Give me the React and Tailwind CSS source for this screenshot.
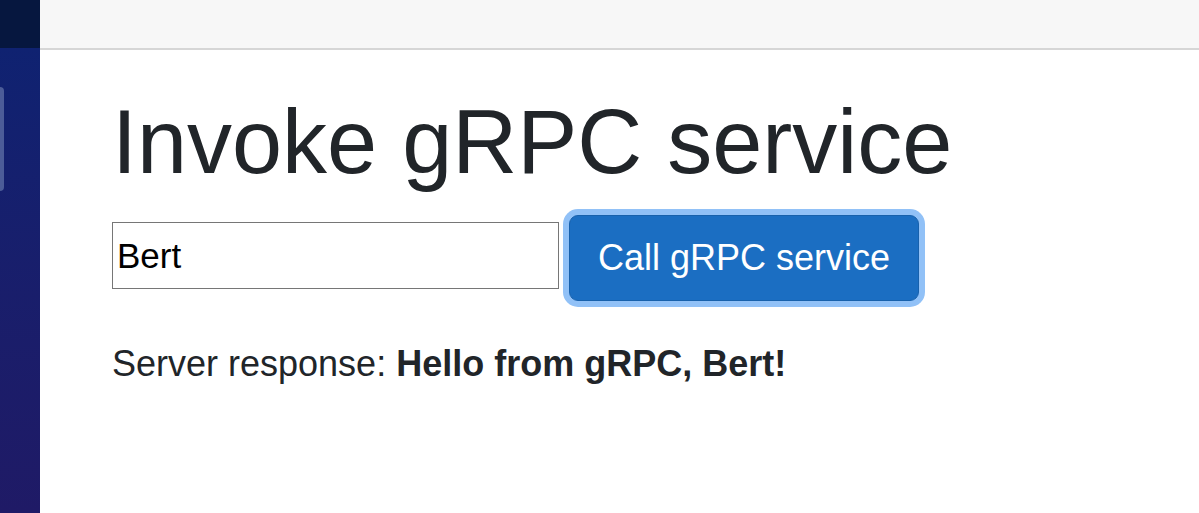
import React, { useState } from 'react';

const App = () => {
    const [name, setName] = useState('Bert');

    return (
        <div className="flex h-[513px] w-[1199px] overflow-hidden bg-white" style={{ fontFamily: '"Liberation Sans", Arial, sans-serif' }}>
            {/* Sidebar */}
            <div className="flex w-[40px] shrink-0 flex-col">
                <div className="h-[48px] bg-[#06173f]" />
                <div className="flex-1 bg-gradient-to-b from-[#0f2271] to-[#1f1a66] pt-[39px]">
                    <div className="h-[104px] w-[4px] rounded-r-[4px] bg-[#4c5c98]" />
                </div>
            </div>

            {/* Main */}
            <div className="flex flex-1 flex-col">
                <div className="h-[50px] shrink-0 border-b-2 border-[#d6d6d6] bg-[#f7f7f7]" />

                <div className="pl-[72px] pt-[38px]">
                    <h1 className="m-0 text-[90px] font-normal leading-[1.2] text-[#212529]">
                        Invoke gRPC service
                    </h1>

                    {/* Input row */}
                    <div className="mt-[19px] flex items-start gap-[10px]">
                        <input
                            value={name}
                            onChange={(e) => setName(e.target.value)}
                            className="mt-[7px] h-[67px] w-[447px] border border-[#767676] bg-white px-[4px] text-[35px] text-black outline-none"
                        />
                        <button className="h-[86px] w-[350px] rounded-[9px] border border-[#1861ac] bg-[#1b6ec2] text-[36px] text-white shadow-[0_0_0_6px_#91c1f7]">
                            Call gRPC service
                        </button>
                    </div>

                    <p className="mt-[36px] text-[36px] leading-[1.5] text-[#212529]">
                        Server response: <strong className="font-bold">Hello from gRPC, {name}!</strong>
                    </p>
                </div>
            </div>
        </div>
    );
};

export default App;
